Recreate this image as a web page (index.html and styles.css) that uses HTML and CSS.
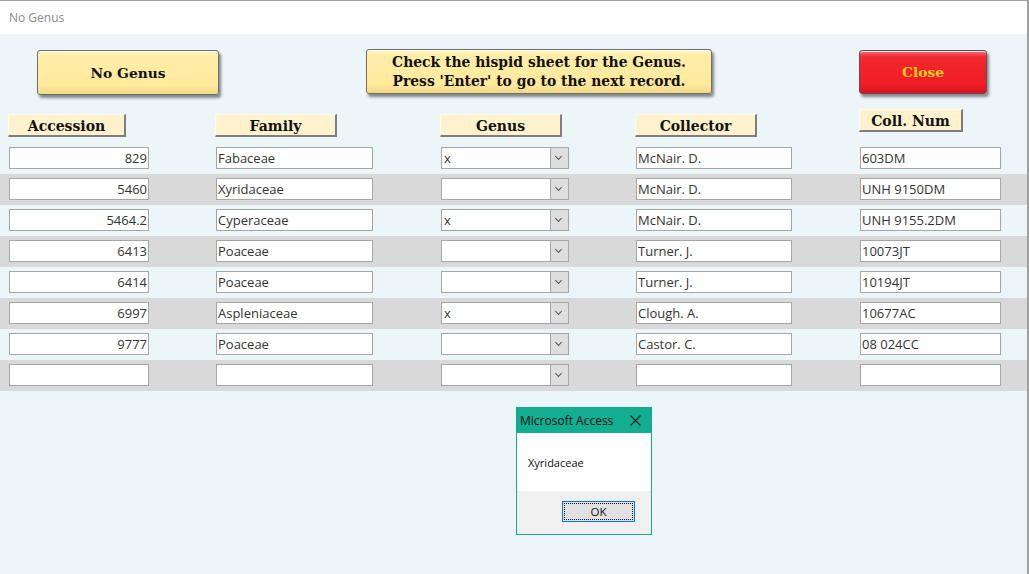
FILE: index.html
```html
<!DOCTYPE html>
<html lang="en">
<head>
<meta charset="UTF-8" />
<title>No Genus</title>
<link rel="stylesheet" href="styles.css">
</head>
<body>

<div class="window">
  <div class="titlebar">No Genus</div>

  <div class="form">
    <!-- Кнопки сверху -->
    <div class="top-buttons">
      <div class="btn btn-nogenus">No Genus</div>
      <div class="btn btn-info">Check the hispid sheet for the Genus.<br>Press 'Enter' to go to the next record.</div>
      <div class="btn btn-close">Close</div>
    </div>

    <!-- Заголовки -->
    <div class="headers">
      <div class="label l-acc">Accession</div>
      <div class="label l-fam">Family</div>
      <div class="label l-gen">Genus</div>
      <div class="label l-col">Collector</div>
      <div class="label l-num">Coll. Num</div>
    </div>

    <!-- Записи -->
    <div class="rows">
      <div class="row">
        <div class="field num">829</div>
        <div class="field">Fabaceae</div>
        <div class="combo"><span class="val">x</span><span class="drop"></span></div>
        <div class="field">McNair. D.</div>
        <div class="field">603DM</div>
      </div>
      <div class="row alt">
        <div class="field num">5460</div>
        <div class="field">Xyridaceae</div>
        <div class="combo"><span class="val"></span><span class="drop"></span></div>
        <div class="field">McNair. D.</div>
        <div class="field">UNH 9150DM</div>
      </div>
      <div class="row">
        <div class="field num">5464.2</div>
        <div class="field">Cyperaceae</div>
        <div class="combo"><span class="val">x</span><span class="drop"></span></div>
        <div class="field">McNair. D.</div>
        <div class="field">UNH 9155.2DM</div>
      </div>
      <div class="row alt">
        <div class="field num">6413</div>
        <div class="field">Poaceae</div>
        <div class="combo"><span class="val"></span><span class="drop"></span></div>
        <div class="field">Turner. J.</div>
        <div class="field">10073JT</div>
      </div>
      <div class="row">
        <div class="field num">6414</div>
        <div class="field">Poaceae</div>
        <div class="combo"><span class="val"></span><span class="drop"></span></div>
        <div class="field">Turner. J.</div>
        <div class="field">10194JT</div>
      </div>
      <div class="row alt">
        <div class="field num">6997</div>
        <div class="field">Aspleniaceae</div>
        <div class="combo"><span class="val">x</span><span class="drop"></span></div>
        <div class="field">Clough. A.</div>
        <div class="field">10677AC</div>
      </div>
      <div class="row">
        <div class="field num">9777</div>
        <div class="field">Poaceae</div>
        <div class="combo"><span class="val"></span><span class="drop"></span></div>
        <div class="field">Castor. C.</div>
        <div class="field">08 024CC</div>
      </div>
      <div class="row alt">
        <div class="field num"></div>
        <div class="field"></div>
        <div class="combo"><span class="val"></span><span class="drop"></span></div>
        <div class="field"></div>
        <div class="field"></div>
      </div>
    </div>

    <!-- Окно сообщения -->
    <div class="msgbox">
      <div class="msg-title">
        <span>Microsoft Access</span>
        <svg class="msg-x" width="11" height="11" viewBox="0 0 11 11"><path d="M0.5 0.5 L10.5 10.5 M10.5 0.5 L0.5 10.5" stroke="#222" stroke-width="1.1" fill="none"/></svg>
      </div>
      <div class="msg-body">Xyridaceae</div>
      <div class="msg-foot">
        <div class="msg-ok"><span>OK</span></div>
      </div>
    </div>
  </div>
</div>

</body>
</html>
```

FILE: styles.css
```css
body {
  margin: 0;
  padding: 0;
  font-family: "Open Sans", "Noto Sans", sans-serif;
  background-color: #ecf5f8;
}
.window {
  width: 1027px;
  height: 573px;
  border-top: 1px solid #a0a0a0;
  border-right: 2px solid #a0a0a0;
  background-color: #ecf5f8;
}
.titlebar {
  height: 33px;
  background-color: #fff;
  color: #8a8a8a;
  font-size: 12px;
  line-height: 33px;
  padding-left: 9px;
}
.form {
  position: relative;
  height: 540px;
}
.top-buttons {
  display: flex;
  align-items: flex-start;
  padding-top: 15px;
  box-sizing: border-box;
  height: 61px;
}
.btn {
  box-sizing: border-box;
  border: 1px solid #6f6f6f;
  border-radius: 3px;
  font-family: "DejaVu Serif", "Liberation Serif", serif;
  font-weight: bold;
  font-size: 13.8px;
  color: #111;
  text-align: center;
  display: flex;
  align-items: center;
  justify-content: center;
  background: linear-gradient(#fff6c8 0%, #ffeea8 12%, #ffe99c 80%, #f3d985 100%);
  box-shadow: 2px 3px 3px rgba(0, 0, 0, 0.45), inset 0 1px 0 rgba(255,255,255,0.8);
}
.btn-nogenus {
  margin-left: 37px;
  margin-top: 1px;
  width: 182px;
  height: 45px;
}
.btn-info {
  margin-left: 147px;
  width: 346px;
  height: 45px;
  line-height: 19px;
  font-size: 13.9px;
  padding-top: 1px;
}
.btn-close {
  margin-left: 147px;
  margin-top: 1px;
  width: 128px;
  height: 44px;
  color: #ffd21a;
  background: linear-gradient(#f9707a 0%, #f22830 14%, #f21c24 80%, #d8141c 100%);
  border-color: #6b4a55;
}
.headers {
  display: flex;
  align-items: flex-start;
  height: 34px;
  margin-top: 14px;
  padding-left: 8px;
}
.label {
  box-sizing: border-box;
  height: 23px;
  margin-top: 5px;
  background-color: #fff2cd;
  border-top: 1px solid #fffaf0;
  border-left: 1px solid #fffaf0;
  border-right: 2px solid #7d7d7d;
  border-bottom: 2px solid #7d7d7d;
  font-family: "DejaVu Serif", "Liberation Serif", serif;
  font-weight: bold;
  font-size: 14px;
  line-height: 22px;
  text-align: center;
  color: #111;
}
.l-acc { width: 118px; }
.l-fam { width: 122px; margin-left: 89px; }
.l-gen { width: 122px; margin-left: 103px; }
.l-col { width: 122px; margin-left: 73px; }
.l-num { width: 104px; margin-left: 102px; margin-top: 0; }
.rows {
  display: flex;
  flex-direction: column;
}
.row {
  display: grid;
  grid-template-columns: 207px 225px 195px 224px 141px;
  align-items: start;
  height: 31px;
  padding-left: 9px;
  padding-top: 4px;
  box-sizing: border-box;
}
.row.alt {
  background-color: #d9d9d9;
}
.field, .combo {
  box-sizing: border-box;
  height: 22px;
  background-color: #fff;
  border: 1px solid #a6a6a6;
  font-size: 13px;
  line-height: 20px;
  color: #333;
  padding: 0 1px;
  white-space: nowrap;
  overflow: hidden;
}
.row > .field:nth-child(1) { width: 140px; }
.row > .field:nth-child(2) { width: 157px; }
.row > .field:nth-child(4) { width: 156px; }
.row > .field:nth-child(5) { width: 141px; }
.field.num {
  text-align: right;
}
.combo {
  width: 128px;
  display: flex;
  padding: 0;
}
.combo .val {
  flex: 1;
  padding-left: 2px;
}
.combo .drop {
  width: 17px;
  background-color: #dedede;
  border-left: 1px solid #a6a6a6;
  position: relative;
}
.combo .drop::after {
  content: "";
  position: absolute;
  left: 5px;
  top: 6px;
  width: 4px;
  height: 4px;
  border-right: 1px solid #555;
  border-bottom: 1px solid #555;
  transform: rotate(45deg);
}
.msgbox {
  position: absolute;
  left: 516px;
  top: 373px;
  width: 136px;
  height: 128px;
  box-sizing: border-box;
  border: 1px solid #17a98d;
  background-color: #fff;
  display: flex;
  flex-direction: column;
}
.msg-title {
  height: 25px;
  background-color: #13ad91;
  display: flex;
  align-items: center;
  justify-content: space-between;
  padding: 0 10px 0 3px;
  font-size: 12px;
  color: #111;
}
.msg-body {
  height: 58px;
  padding-left: 11px;
  font-size: 11px;
  line-height: 60px;
  color: #111;
}
.msg-foot {
  flex: 1;
  background-color: #f0f0f0;
  display: flex;
  justify-content: flex-end;
  align-items: flex-start;
  padding: 10px 16px 0 0;
}
.msg-ok {
  box-sizing: border-box;
  width: 73px;
  height: 21px;
  border: 1px solid #0078d7;
  background-color: #e1e1e1;
  padding: 1px;
}
.msg-ok span {
  display: block;
  height: 100%;
  box-sizing: border-box;
  border: 1px dotted #111;
  text-align: center;
  font-size: 11.5px;
  line-height: 15px;
  color: #111;
}
```
